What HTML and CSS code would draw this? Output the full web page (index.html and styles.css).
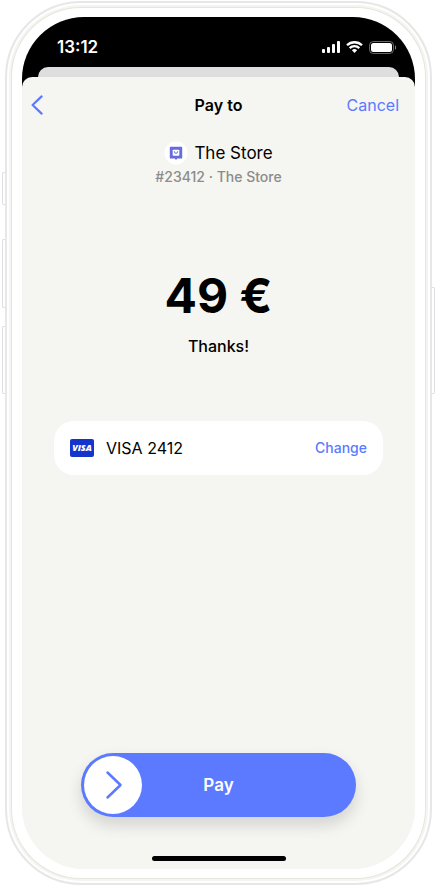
FILE: index.html
```html
<!DOCTYPE html>
<html lang="en">
<head>
<meta charset="utf-8">
<meta name="viewport" content="width=device-width, initial-scale=1">
<title>Pay to The Store</title>
<link rel="stylesheet" href="styles.css">
</head>
<body>
<div class="phone">
  <span class="key key-mute"></span>
  <span class="key key-up"></span>
  <span class="key key-down"></span>
  <span class="key key-power"></span>
  <div class="screen">
    <div class="status">
      <span class="time">13:12</span>
      <div class="status-icons">
        <svg width="18" height="12" viewBox="0 0 18 12" fill="#fff" aria-hidden="true">
          <rect x="0" y="8" width="3" height="4" rx="1"/>
          <rect x="5" y="6" width="3" height="6" rx="1"/>
          <rect x="10" y="3" width="3" height="9" rx="1"/>
          <rect x="15" y="0" width="3" height="12" rx="1"/>
        </svg>
        <svg width="17" height="12" viewBox="0 0 17 12" fill="none" stroke="#fff" stroke-width="2.3" aria-hidden="true">
          <path d="M1 4.3a10.7 10.7 0 0 1 15 0"/>
          <path d="M3.7 7.1a6.8 6.8 0 0 1 9.6 0"/>
          <path d="M8.5 12 5.9 9.3a3.7 3.7 0 0 1 5.2 0z" fill="#fff" stroke="none"/>
        </svg>
        <svg width="27" height="13" viewBox="0 0 27 13" aria-hidden="true">
          <rect x=".5" y=".5" width="24" height="12" rx="3.8" fill="none" stroke="#fff" stroke-opacity=".4"/>
          <rect x="2" y="2" width="21" height="9" rx="2.5" fill="#fff"/>
          <path d="M26 4.5v4a2.2 2.2 0 0 0 0-4z" fill="#fff" fill-opacity=".5"/>
        </svg>
      </div>
    </div>
    <div class="back-sheet"></div>
    <main class="sheet">
      <header class="nav">
        <button class="back" type="button" aria-label="Back">
          <svg width="12" height="20" viewBox="0 0 12 20" fill="none" stroke="#5b7aff" stroke-width="2.2" stroke-linecap="round" stroke-linejoin="round" aria-hidden="true"><path d="M10.6 1.4 1.6 10l9 8.6"/></svg>
        </button>
        <h1 class="title">Pay to</h1>
        <button class="cancel" type="button">Cancel</button>
      </header>
      <div class="store">
        <svg width="24" height="24" viewBox="0 0 24 24" aria-hidden="true">
          <circle cx="12" cy="12" r="11.5" fill="#fff"/>
          <path d="M6.500 5.800h11q.7 0 .7.7v10.400q0 .7-.7.7h-4.200L12 19l-1.300-1.400H6.500q-.7 0-.7-.7V6.500q0-.7.7-.7z" fill="#686bdc"/>
          <rect x="8.700" y="8.700" width="6.600" height="6" rx=".6" fill="#fff"/>
          <path d="M10.300 10.300q0 2 1.700 2t1.700-2" fill="none" stroke="#686bdc" stroke-width="1"/>
        </svg>
        <span class="store-name">The Store</span>
      </div>
      <p class="reference">#23412 · The Store</p>
      <p class="amount">49 €</p>
      <p class="message">Thanks!</p>
      <section class="card" aria-label="Payment method">
        <svg width="24" height="18" viewBox="0 0 24 18" aria-hidden="true">
          <rect width="24" height="18" rx="2" fill="#1434cb"/>
          <text class="card-brand" x="12" y="12" text-anchor="middle">VISA</text>
        </svg>
        <span class="card-name">VISA 2412</span>
        <button class="change" type="button">Change</button>
      </section>
      <button class="pay" type="button">
        <span class="knob">
          <svg width="20" height="30" viewBox="0 0 20 30" fill="none" stroke="#5b7aff" stroke-width="2.5" stroke-linecap="round" stroke-linejoin="round" aria-hidden="true"><path d="M4.500 2.500 17.500 15l-13 12.500"/></svg>
        </span>
        <span class="pay-label">Pay</span>
      </button>
      <div class="home"></div>
    </main>
  </div>
</div>
</body>
</html>
```
FILE: styles.css
```css
* {
  box-sizing: border-box;
}

body {
  margin: 0;
  padding: 1px 5px 0;
  background: #fff;
  color: #000;
  font-family: Inter, "Liberation Sans", sans-serif;
  font-size: 16px;
  line-height: 20px;
}

h1,
p {
  margin: 0;
}

button {
  padding: 0;
  border: 0;
  background: none;
  color: #5b7aff;
  font: inherit;
  cursor: pointer;
}

svg {
  display: block;
  flex: none;
}

.phone {
  position: relative;
  display: flex;
  min-height: calc(100vh - 1px);
  padding: 14px 15px;
  border: 2px solid #e7e7e7;
  border-radius: 76px;
  background: #fff;
  box-shadow: inset 0 0 0 2px #fff, inset 0 0 0 4px #f4f4f0, inset 0 0 0 5px #e6e6df;
}

.key {
  position: absolute;
  left: -5px;
  width: 3px;
  border: 1px solid #dcdfe4;
  border-right: 0;
  border-radius: 2px 0 0 2px;
}

.key-mute {
  top: 169px;
  height: 33px;
}

.key-up {
  top: 236px;
  height: 69px;
}

.key-down {
  top: 323px;
  height: 68px;
}

.key-power {
  top: 284px;
  right: -5px;
  left: auto;
  height: 107px;
  border: 1px solid #dcdfe4;
  border-left: 0;
  border-radius: 0 2px 2px 0;
}

.screen {
  display: flex;
  flex: 1;
  flex-direction: column;
  overflow: hidden;
  border-radius: 62px;
  background: linear-gradient(#000 50%, #f5f5f1 50%);
}

.status {
  display: flex;
  align-items: center;
  justify-content: space-between;
  height: 50px;
  padding: 10px 18px 0 35px;
  color: #fff;
}

.time {
  font-size: 17px;
  font-weight: 600;
}

.status-icons {
  display: flex;
  align-items: center;
  gap: 6px;
  padding-right: 1px;
}

.back-sheet {
  height: 10px;
  margin: 0 16px;
  border-radius: 10px 10px 0 0;
  background: #dedede;
}

.sheet {
  display: flex;
  flex: 1;
  flex-direction: column;
  align-items: center;
  padding: 16px 0 8px;
  border-radius: 10px 10px 0 0;
  background: #f5f5f1;
}

.nav {
  display: grid;
  grid-template-columns: 1fr auto 1fr;
  align-items: center;
  align-self: stretch;
  height: 24px;
  padding: 0 16px 0 16px;
}

.back {
  justify-self: start;
  margin-left: -7px;
}

.title {
  font-size: 16px;
  font-weight: 600;
  line-height: 20px;
}

.cancel {
  justify-self: end;
}

.store {
  display: flex;
  align-items: center;
  gap: 6px;
  margin-top: 24px;
}

.store-name {
  font-size: 17px;
}

.reference {
  margin-top: 2px;
  color: #8c8c8a;
  font-size: 14px;
  font-weight: 500;
}

.amount {
  margin-top: 81px;
  font-size: 48px;
  font-weight: 700;
  line-height: 56px;
}

.message {
  margin-top: 12px;
  font-weight: 500;
}

.card {
  display: flex;
  align-items: center;
  align-self: stretch;
  gap: 12px;
  height: 54px;
  margin: 65px 32px 0;
  padding: 0 16px;
  border-radius: 20px;
  background: #fff;
}

.card-brand {
  fill: #fff;
  font-family: "Open Sans", "Noto Sans", sans-serif;
  font-size: 9px;
  font-style: italic;
  font-weight: 800;
}

.change {
  margin-left: auto;
  font-size: 14px;
  font-weight: 500;
}

.pay {
  display: grid;
  grid-template-columns: 58px 1fr 58px;
  align-items: center;
  width: 70%;
  height: 64px;
  margin-top: auto;
  padding: 3px;
  border-radius: 32px;
  background: #5b7aff;
  box-shadow: 0 8px 16px rgba(0, 0, 0, 0.14);
  color: #fff;
}

.knob {
  display: flex;
  align-items: center;
  justify-content: center;
  height: 58px;
  border-radius: 50%;
  background: #fff;
}

.pay-label {
  font-size: 17px;
  font-weight: 600;
}

.home {
  width: 134px;
  height: 5px;
  margin-top: 39px;
  border-radius: 3px;
  background: #000;
}
```
